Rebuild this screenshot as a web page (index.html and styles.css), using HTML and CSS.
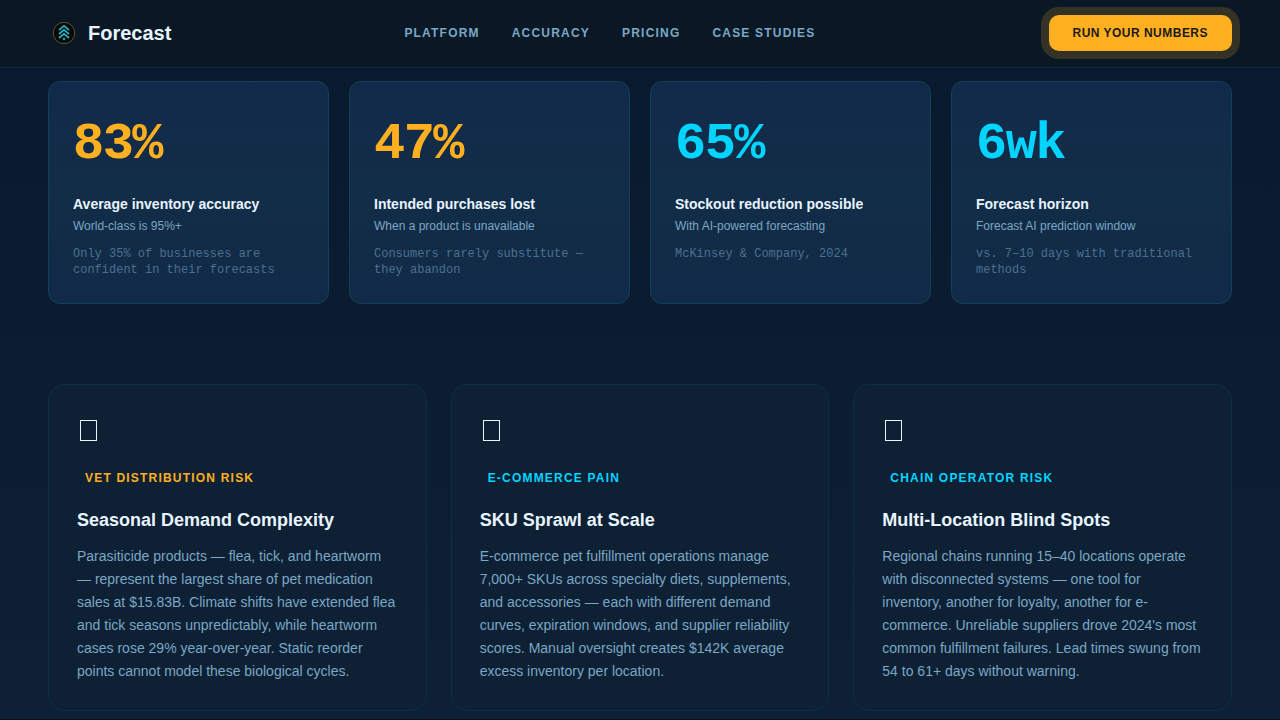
FILE: index.html
```html
<!DOCTYPE html>
<html lang="en">
<head>
<meta charset="utf-8">
<meta name="viewport" content="width=device-width, initial-scale=1">
<title>Forecast</title>
<link rel="stylesheet" href="styles.css">
</head>
<body>
<header class="header">
  <a class="brand" href="#">
    <svg class="brand-mark" viewBox="0 0 32 32" aria-hidden="true">
      <circle cx="16" cy="16" r="10.700" fill="#04080b" stroke="#6b5128" stroke-width="1"/>
      <g fill="none" stroke="#2bb0c0" stroke-width="1.700">
        <path d="M11 13 16 8.800l5 4.200"/>
        <path d="M11 17 16 12.800l5 4.200"/>
        <path d="M11 21 16 16.800l5 4.200"/>
      </g>
      <circle cx="16" cy="22" r="1.200" fill="#2bb0c0"/>
    </svg>
    <span>Forecast</span>
  </a>
  <nav class="nav" aria-label="Main">
    <a href="#">Platform</a>
    <a href="#">Accuracy</a>
    <a href="#">Pricing</a>
    <a href="#">Case Studies</a>
  </nav>
  <button class="cta" type="button">Run Your Numbers</button>
</header>
<main class="main">
  <section class="stats">
    <article class="stat">
      <div class="stat-value amber">83%</div>
      <h3 class="stat-label">Average inventory accuracy</h3>
      <p class="stat-sub">World-class is 95%+</p>
      <p class="stat-note">Only 35% of businesses are confident in their forecasts</p>
    </article>
    <article class="stat">
      <div class="stat-value amber">47%</div>
      <h3 class="stat-label">Intended purchases lost</h3>
      <p class="stat-sub">When a product is unavailable</p>
      <p class="stat-note">Consumers rarely substitute — they abandon</p>
    </article>
    <article class="stat">
      <div class="stat-value cyan">65%</div>
      <h3 class="stat-label">Stockout reduction possible</h3>
      <p class="stat-sub">With AI-powered forecasting</p>
      <p class="stat-note">McKinsey &amp; Company, 2024</p>
    </article>
    <article class="stat">
      <div class="stat-value cyan">6wk</div>
      <h3 class="stat-label">Forecast horizon</h3>
      <p class="stat-sub">Forecast AI prediction window</p>
      <p class="stat-note">vs. 7–10 days with traditional methods</p>
    </article>
  </section>
  <section class="risks">
    <article class="risk">
      <svg class="risk-icon" viewBox="0 0 24 36" aria-hidden="true"><rect x="3.500" y="7.500" width="16" height="20"/></svg>
      <span class="tag amber">Vet Distribution Risk</span>
      <h2 class="risk-title">Seasonal Demand Complexity</h2>
      <p class="risk-text">Parasiticide products — flea, tick, and heartworm — represent the largest share of pet medication sales at $15.83B. Climate shifts have extended flea and tick seasons unpredictably, while heartworm cases rose 29% year-over-year. Static reorder points cannot model these biological cycles.</p>
    </article>
    <article class="risk">
      <svg class="risk-icon" viewBox="0 0 24 36" aria-hidden="true"><rect x="3.500" y="7.500" width="16" height="20"/></svg>
      <span class="tag cyan">E-Commerce Pain</span>
      <h2 class="risk-title">SKU Sprawl at Scale</h2>
      <p class="risk-text">E-commerce pet fulfillment operations manage 7,000+ SKUs across specialty diets, supplements, and accessories — each with different demand curves, expiration windows, and supplier reliability scores. Manual oversight creates $142K average excess inventory per location.</p>
    </article>
    <article class="risk">
      <svg class="risk-icon" viewBox="0 0 24 36" aria-hidden="true"><rect x="3.500" y="7.500" width="16" height="20"/></svg>
      <span class="tag cyan">Chain Operator Risk</span>
      <h2 class="risk-title">Multi-Location Blind Spots</h2>
      <p class="risk-text">Regional chains running 15–40 locations operate with disconnected systems — one tool for inventory, another for loyalty, another for e-commerce. Unreliable suppliers drove 2024's most common fulfillment failures. Lead times swung from 54 to 61+ days without warning.</p>
    </article>
  </section>
</main>
</body>
</html>
```
FILE: styles.css
```css
* { box-sizing: border-box; }

body {
  margin: 0;
  background: #07101d;
  color: #e8f4ff;
  font-family: "Liberation Sans", Arial, sans-serif;
}

h2, h3, p { margin: 0; }

.header {
  display: flex;
  align-items: center;
  justify-content: space-between;
  padding: 15px 48px 16px;
  background: #091824;
  border-bottom: 1px solid #0d2a3d;
}

.brand {
  display: flex;
  align-items: center;
  gap: 8px;
  color: #e8f4ff;
  font-size: 20px;
  font-weight: 700;
  text-decoration: none;
}

.brand-mark { width: 32px; height: 32px; }

.nav { display: flex; gap: 32px; }

.nav a {
  color: #7ba7c4;
  font-size: 12px;
  font-weight: 700;
  letter-spacing: 0.1em;
  text-decoration: none;
  text-transform: uppercase;
}

.cta {
  padding: 0 24px;
  border: 0;
  border-radius: 10px;
  background: #ffb020;
  box-shadow: 0 0 0 8px #343224;
  color: #1c1a1a;
  font-family: inherit;
  font-size: 12px;
  font-weight: 700;
  letter-spacing: 0.04em;
  line-height: 36px;
  text-transform: uppercase;
}

.main { background: linear-gradient(180deg, #0a1a2e, #0c1d31 50%, #0d2035); }

.stats {
  display: grid;
  grid-template-columns: repeat(4, 1fr);
  gap: 20px;
  padding: 13px 48px 40px;
}

.stat {
  padding: 24px 24px 25px;
  border: 1px solid #124058;
  border-radius: 12px;
  background: linear-gradient(180deg, #122a4a, #122d47 50%, #112a48);
}

.stat-value {
  margin-bottom: 10px;
  font-family: "Liberation Mono", monospace;
  font-size: 52px;
  font-weight: 700;
  letter-spacing: -0.03em;
  line-height: 78px;
}

.amber { color: #ffb020; }
.cyan { color: #00d4ff; }

.stat-label {
  margin-bottom: 2px;
  font-size: 14px;
  line-height: 20px;
}

.stat-sub {
  margin-bottom: 10px;
  color: #7ba7c4;
  font-size: 12px;
  line-height: 20px;
}

.stat-note {
  color: #4a7090;
  font-family: "Liberation Mono", monospace;
  font-size: 12px;
  line-height: 16px;
}

.risks {
  display: grid;
  grid-template-columns: repeat(3, 1fr);
  gap: 24px;
  padding: 40px 48px 8px;
}

.risk {
  padding: 28px 28px 27px;
  border: 1px solid #0e2e43;
  border-radius: 16px;
  background: #0d2034;
}

.risk-icon {
  display: block;
  width: 24px;
  height: 36px;
  margin-bottom: 17px;
  fill: none;
  stroke: #e8f4ff;
}

.tag {
  display: inline-block;
  padding: 0 8px;
  font-size: 12px;
  font-weight: 700;
  letter-spacing: 0.1em;
  line-height: 24px;
  text-transform: uppercase;
}

.risk-title {
  margin: 16px 0 11px;
  font-size: 18px;
  line-height: 28px;
}

.risk-text {
  color: #7ba7c4;
  font-size: 14px;
  line-height: 23px;
}
```
